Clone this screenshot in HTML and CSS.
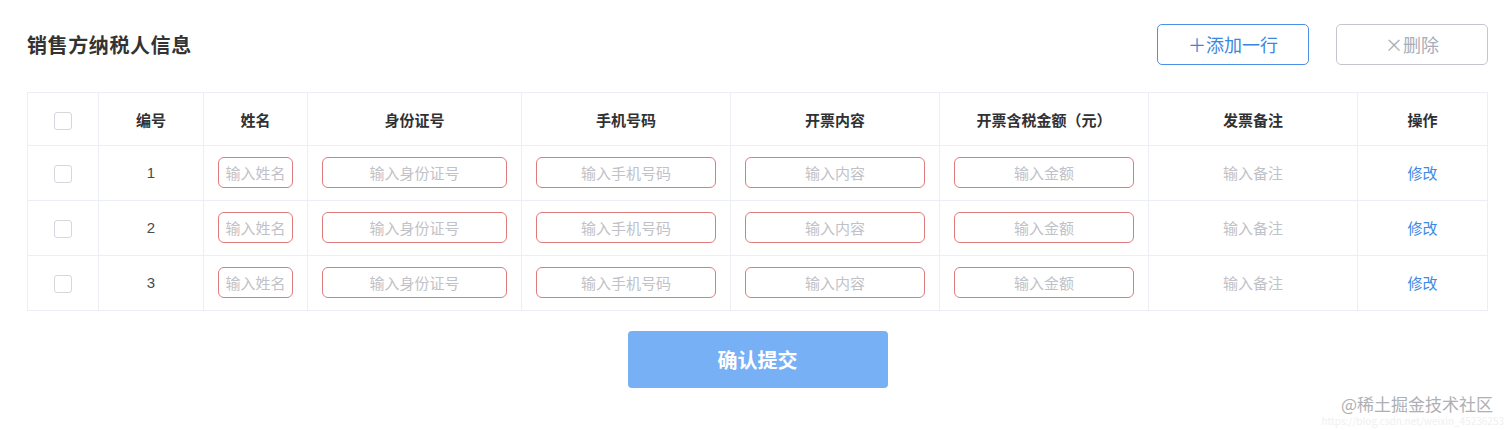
FILE: index.html
```html
<!DOCTYPE html>
<html lang="zh-CN">
<head>
<meta charset="utf-8">
<title>销售方纳税人信息</title>
<link rel="stylesheet" href="styles.css">
</head>
<body>
<div class="page">
  <div class="topbar">
    <h2 class="title">销售方纳税人信息</h2>
    <div class="actions">
      <button class="btn btn-add">＋添加一行</button>
      <button class="btn btn-del">×删除</button>
    </div>
  </div>
  <table class="grid">
    <colgroup>
      <col class="c-check"><col class="c-no"><col class="c-name"><col class="c-id">
      <col class="c-w"><col class="c-w"><col class="c-w"><col class="c-w"><col class="c-op">
    </colgroup>
    <thead>
      <tr>
        <th><span class="checkbox"></span></th>
        <th>编号</th><th>姓名</th><th>身份证号</th><th>手机号码</th><th>开票内容</th><th>开票含税金额（元）</th><th>发票备注</th><th>操作</th>
      </tr>
    </thead>
    <tbody>
      <tr>
        <td><span class="checkbox"></span></td>
        <td class="num">1</td>
        <td><div class="inp">输入姓名</div></td>
        <td><div class="inp">输入身份证号</div></td>
        <td><div class="inp">输入手机号码</div></td>
        <td><div class="inp">输入内容</div></td>
        <td><div class="inp">输入金额</div></td>
        <td class="ph">输入备注</td>
        <td class="link">修改</td>
      </tr>
      <tr>
        <td><span class="checkbox"></span></td>
        <td class="num">2</td>
        <td><div class="inp">输入姓名</div></td>
        <td><div class="inp">输入身份证号</div></td>
        <td><div class="inp">输入手机号码</div></td>
        <td><div class="inp">输入内容</div></td>
        <td><div class="inp">输入金额</div></td>
        <td class="ph">输入备注</td>
        <td class="link">修改</td>
      </tr>
      <tr>
        <td><span class="checkbox"></span></td>
        <td class="num">3</td>
        <td><div class="inp">输入姓名</div></td>
        <td><div class="inp">输入身份证号</div></td>
        <td><div class="inp">输入手机号码</div></td>
        <td><div class="inp">输入内容</div></td>
        <td><div class="inp">输入金额</div></td>
        <td class="ph">输入备注</td>
        <td class="link">修改</td>
      </tr>
    </tbody>
  </table>
  <div class="submit-row">
    <button class="btn-submit">确认提交</button>
  </div>
</div>
<div class="watermark">
  <div class="wm-main">@稀土掘金技术社区</div>
  <div class="wm-url">https://blog.csdn.net/weixin_45236253</div>
</div>
</body>
</html>
```
FILE: styles.css
```css
html, body {
  margin: 0;
  padding: 0;
  background: #fff;
  font-family: "Noto Sans CJK SC", "Liberation Sans", sans-serif;
  color: #303133;
}
.page {
  width: 1461px;
  padding: 24px 0 0 27px;
}
.topbar {
  display: flex;
  align-items: center;
  justify-content: space-between;
  height: 40px;
}
.title {
  margin: 0;
  font-size: 20px;
  font-weight: 700;
  color: #333;
  letter-spacing: 0.6px;
}
.actions {
  display: flex;
  gap: 27px;
}
.btn {
  width: 152px;
  height: 41px;
  border-radius: 5px;
  background: #fff;
  font-family: inherit;
  font-size: 18px;
  padding: 0;
  cursor: pointer;
}
.btn-add {
  border: 1px solid #4a90e6;
  color: #3d86e0;
}
.btn-del {
  border: 1px solid #c3c6cd;
  color: #a9adb6;
}
.grid {
  margin-top: 28px;
  width: 1461px;
  border-collapse: collapse;
  table-layout: fixed;
  font-size: 15px;
}
.c-check { width: 71px; }
.c-no { width: 105px; }
.c-name { width: 104px; }
.c-id { width: 214px; }
.c-w { width: 209px; }
.c-op { width: 130px; }
.grid th, .grid td {
  border: 1px solid #ebeef5;
  text-align: center;
  padding: 0 14px;
}
.grid th {
  height: 52px;
  font-weight: 700;
  color: #303133;
}
.grid td {
  height: 52px;
  padding-bottom: 2px;
}
.checkbox {
  display: inline-block;
  width: 16px;
  height: 16px;
  border: 1px solid #d4d7de;
  border-radius: 3px;
  vertical-align: middle;
  background: #fff;
}
.num {
  color: #4a4a4a;
  font-family: "Liberation Sans", sans-serif;
}
.inp {
  height: 29px;
  line-height: 29px;
  border: 1px solid #de7b7c;
  border-radius: 6px;
  color: #bfc2c8;
  text-align: center;
  white-space: nowrap;
  overflow: hidden;
}
.ph {
  color: #bfc2c8;
}
.link {
  color: #3d8ae6;
}
.submit-row {
  display: flex;
  justify-content: center;
  margin-top: 20px;
}
.btn-submit {
  width: 260px;
  height: 57px;
  border: none;
  border-radius: 4px;
  background: #78b0f6;
  color: #fff;
  font-family: inherit;
  font-size: 20px;
  font-weight: 700;
  cursor: pointer;
}
.watermark {
  position: absolute;
  right: 8px;
  top: 394px;
  display: flex;
  flex-direction: column;
  align-items: flex-end;
}
.wm-main {
  font-size: 17px;
  line-height: 20px;
  color: #aeb0b4;
  padding-right: 11px;
}
.wm-url {
  font-size: 10px;
  line-height: 11px;
  color: #eef0f2;
  margin-top: 1px;
}
```
